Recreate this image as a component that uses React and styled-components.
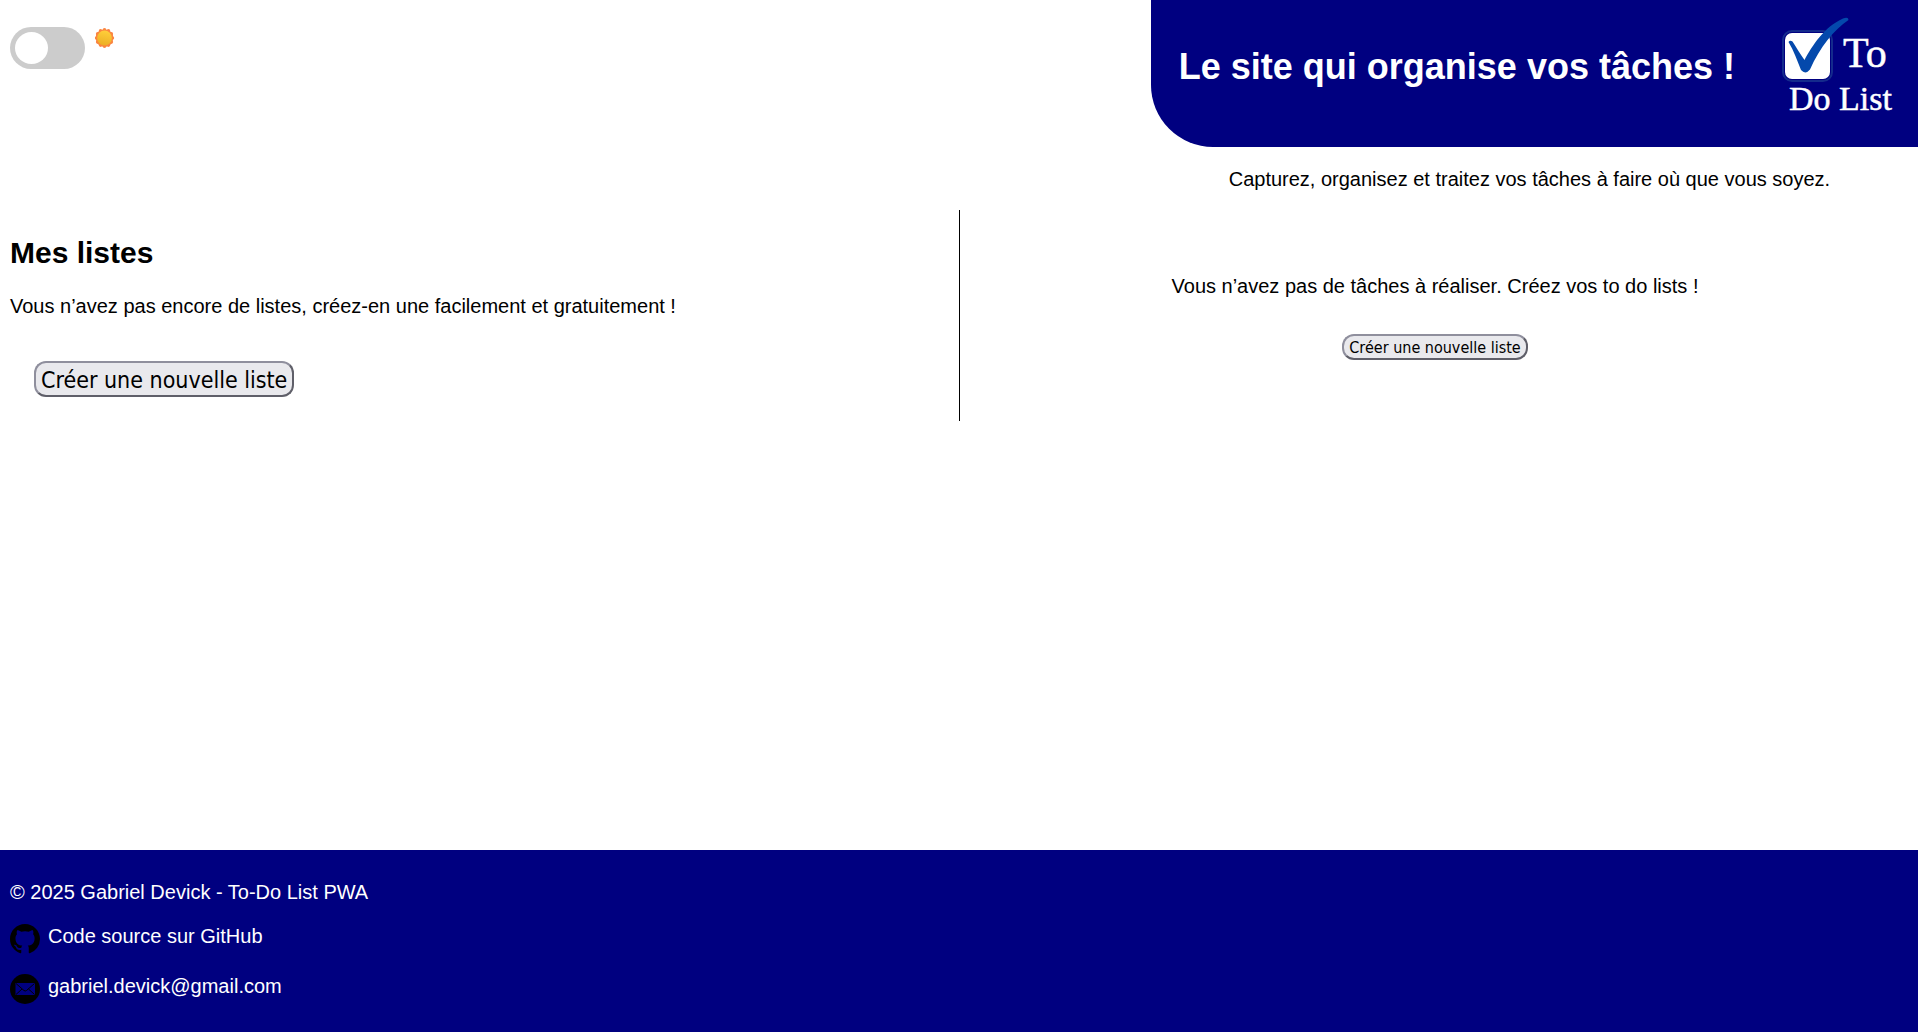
import React, { useState } from "react";
import styled, { createGlobalStyle } from "styled-components";

const GlobalStyle = createGlobalStyle`
  *, *::before, *::after { box-sizing: border-box; }
  body {
    margin: 0;
    background: #fff;
    color: #000;
    font-family: Arial, "Liberation Sans", sans-serif;
    font-size: 20px;
    line-height: 24px;
  }
  h1, h2, p { margin: 0; }
`;

const Page = styled.div`
  min-height: 100vh;
  display: flex;
  flex-direction: column;
`;

const Header = styled.header`
  display: flex;
  justify-content: space-between;
  align-items: flex-start;
  padding-left: 10px;
`;

const ThemeSwitch = styled.label`
  display: flex;
  align-items: flex-start;
  gap: 10px;
  padding-top: 27px;
  cursor: pointer;
`;

const SwitchInput = styled.input`
  appearance: none;
  width: 75px;
  height: 42px;
  margin: 0;
  padding: 5px;
  border-radius: 21px;
  background: #ccc;
  cursor: pointer;

  &::before {
    content: "";
    display: block;
    width: 33px;
    height: 32px;
    border-radius: 50%;
    background: #fff;
  }

  &:checked { background: #000080; }
  &:checked::before { margin-left: auto; }
`;

const Banner = styled.div`
  width: 40vw;
  min-height: 147px;
  display: flex;
  justify-content: space-between;
  align-items: flex-start;
  padding: 0 20px 0 28px;
  border-bottom-left-radius: 62px;
  background: #000080;
  color: #fff;
`;

const Title = styled.h1`
  padding-top: 46px;
  font-size: 36px;
  line-height: 42px;
`;

const Tagline = styled.p`
  width: 40vw;
  margin-left: auto;
  padding: 20px 10px 19px 0;
  text-align: center;
`;

const Columns = styled.main`
  display: grid;
  grid-template-columns: 1fr 1fr;
`;

const Lists = styled.section`
  display: flex;
  flex-direction: column;
  align-items: flex-start;
  padding: 24px 10px;
`;

const Tasks = styled.section`
  display: flex;
  flex-direction: column;
  align-items: center;
  gap: 36px;
  padding: 64px 10px 24px 2px;
  border-left: 1px solid #000;
`;

const SectionTitle = styled.h2`
  font-size: 30px;
  line-height: 38px;
  margin-bottom: 22px;
`;

const CreateButton = styled.button`
  height: ${(p) => (p.$large ? 36 : 26)}px;
  margin: ${(p) => (p.$large ? "43px 24px 0" : "0")};
  padding: 2px 5px 0;
  border: 2px solid;
  border-color: #8f8f9d #5f5f69 #5f5f69 #8f8f9d;
  border-radius: 12px;
  background: #e9e9ed;
  color: #000;
  font-family: "DejaVu Sans Condensed", "DejaVu Sans", sans-serif;
  font-stretch: condensed;
  font-size: ${(p) => (p.$large ? 23 : 16)}px;
  line-height: ${(p) => (p.$large ? 30 : 20)}px;
`;

const Footer = styled.footer`
  margin-top: auto;
  padding: 30px 10px 28px;
  background: #000080;
  color: #fff;
`;

const FooterLink = styled.a`
  display: flex;
  width: fit-content;
  gap: 8px;
  margin-top: 20px;
  color: inherit;
  text-decoration: none;
`;

const LogoDrawing = styled.svg`
  flex: none;
  width: 120px;
  height: 130px;
`;

function Sun() {
  const rays = Array.from({ length: 12 }, (_, i) => (i * Math.PI) / 6);
  return (
    <svg width="20" height="22" viewBox="0 0 20 22" aria-hidden="true">
      <defs>
        <linearGradient id="sun" x1="0.6" y1="0" x2="0.4" y2="1">
          <stop offset="0" stopColor="#ffcf3a" />
          <stop offset="1" stopColor="#ecae25" />
        </linearGradient>
      </defs>
      {rays.map((a) => (
        <circle key={a} cx={9.5 + 7.9 * Math.sin(a)} cy={11 - 8.2 * Math.cos(a)} r="1.8" fill="#fb8540" />
      ))}
      <circle cx="9.5" cy="11" r="8.8" fill="#fb8540" />
      <circle cx="9.5" cy="11" r="7.4" fill="url(#sun)" />
    </svg>
  );
}

function Logo() {
  return (
    <LogoDrawing viewBox="0 0 120 130" role="img" aria-label="To Do List">
      <rect x="5" y="31" width="49" height="50" rx="9" fill="#000080" stroke="#142a8c" strokeWidth="2" />
      <rect x="7" y="33" width="45" height="46" rx="7" fill="#fff" />
      <path
        d="M10.500 42 Q12 40 14.500 41.500 C18 47 22 54 26.500 60 C34 46 46 27 65 18.500 Q70.500 16.500 70.500 20 C56 30 42 47 32 69.500 Q27.500 75 23 70 C19 60 16 51 10.500 42Z"
        fill="#0449ac"
      />
      <g fill="#fff" stroke="#fff" strokeWidth="0.500" fontFamily="'Liberation Serif', serif">
        <text x="65" y="67" fontSize="42">To</text>
        <text x="11" y="110" fontSize="34">Do List</text>
      </g>
    </LogoDrawing>
  );
}

function GitHubIcon() {
  return (
    <svg width="30" height="30" viewBox="0 0 16 16" aria-hidden="true">
      <path d="M8 0C3.580 0 0 3.580 0 8c0 3.540 2.290 6.530 5.470 7.590.4.070.55-.17.55-.38 0-.19-.01-.82-.01-1.490-2.010.37-2.530-.49-2.690-.94-.09-.23-.48-.94-.82-1.130-.28-.15-.68-.52-.01-.53.63-.01 1.080.58 1.230.82.72 1.210 1.870.87 2.330.66.07-.52.28-.87.51-1.070-1.780-.2-3.640-.89-3.640-3.950 0-.87.31-1.590.82-2.150-.08-.2-.36-1.020.08-2.120 0 0 .67-.21 2.200.82.64-.18 1.320-.27 2-.27s1.360.09 2 .27c1.530-1.040 2.200-.82 2.200-.82.44 1.100.16 1.920.08 2.120.51.56.82 1.270.82 2.150 0 3.070-1.870 3.750-3.650 3.950.29.25.54.73.54 1.480 0 1.070-.01 1.930-.01 2.200 0 .21.15.46.55.38A8.010 8.010 0 0 0 16 8c0-4.420-3.580-8-8-8Z" />
    </svg>
  );
}

function MailIcon() {
  return (
    <svg width="30" height="30" viewBox="0 0 30 30" aria-hidden="true">
      <circle cx="15" cy="15" r="15" />
      <rect x="5.500" y="9" width="19.500" height="12" fill="#000080" />
      <path
        d="M6 9.500 L14 16.500 Q15.200 17.500 16.500 16.500 L24.500 9.500 M6 20.500 L12 15 M24.500 20.500 L18.500 15"
        fill="none"
        stroke="#000"
        strokeWidth="1"
      />
    </svg>
  );
}

export default function App() {
  const [dark, setDark] = useState(false);
  return (
    <Page>
      <GlobalStyle />
      <Header>
        <ThemeSwitch>
          <SwitchInput
            type="checkbox"
            aria-label="Thème sombre"
            checked={dark}
            onChange={(e) => setDark(e.target.checked)}
          />
          <Sun />
        </ThemeSwitch>
        <Banner>
          <Title>Le site qui organise vos tâches !</Title>
          <Logo />
        </Banner>
      </Header>
      <Tagline>Capturez, organisez et traitez vos tâches à faire où que vous soyez.</Tagline>
      <Columns>
        <Lists>
          <SectionTitle>Mes listes</SectionTitle>
          <p>Vous n’avez pas encore de listes, créez-en une facilement et gratuitement !</p>
          <CreateButton type="button" $large>Créer une nouvelle liste</CreateButton>
        </Lists>
        <Tasks>
          <p>Vous n’avez pas de tâches à réaliser. Créez vos to do lists !</p>
          <CreateButton type="button">Créer une nouvelle liste</CreateButton>
        </Tasks>
      </Columns>
      <Footer>
        <p>© 2025 Gabriel Devick - To-Do List PWA</p>
        <FooterLink href="#github">
          <GitHubIcon />
          <span>Code source sur GitHub</span>
        </FooterLink>
        <FooterLink href="mailto:gabriel.devick@gmail.com">
          <MailIcon />
          <span>gabriel.devick@gmail.com</span>
        </FooterLink>
      </Footer>
    </Page>
  );
}
